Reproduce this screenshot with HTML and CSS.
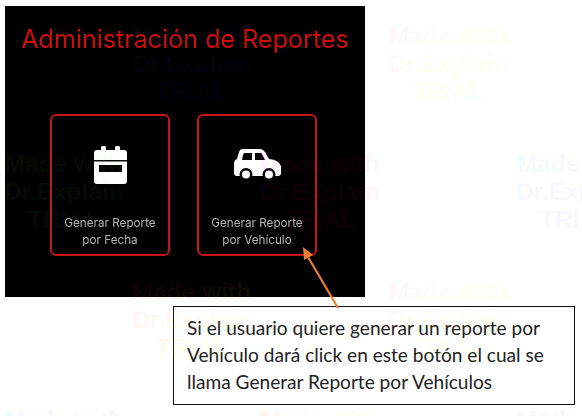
FILE: index.html
```html
<!DOCTYPE html>
<html lang="en">
<head>
  <meta charset="UTF-8" />
  <title>Administración de Reportes</title>
  <link rel="stylesheet" href="styles.css">
</head>
<body>
  <div class="panel">
    <h1 class="panel-title">Administración de Reportes</h1>
    <div class="cards">
      <div class="card">
        <svg class="icon icon-calendar" viewBox="0 0 33 38" width="33" height="38">
          <path fill="#fff" d="M8 0h3q1 0 1 1.500V4h9V1.500Q21 0 22 0h3q1 0 1 1.500V4h4q3 0 3 3v7H0V7q0-3 3-3h4V1.500Q7 0 8 0z"/>
          <path fill="#fff" d="M0 15.500h33V35q0 3-3 3H3q-3 0-3-3z"/>
          <rect x="5" y="19" width="23" height="7" fill="#000"/>
        </svg>
        <span class="card-label">Generar Reporte<br>por Fecha</span>
      </div>
      <div class="card">
        <svg class="icon icon-car" viewBox="0 0 47 33" width="47" height="33">
          <path fill="#fff" d="M8 0H26Q29 0 31 3L35 10Q45 11 47 17V24Q47 27 44 27H3Q0 27 0 24V15Q0 11 3 10L5 3Q6 0 8 0Z"/>
          <path fill="#000" d="M11 4H18V11H8L9 6Q9.500 4 11 4ZM21 4H26Q27.500 4 28 5L31 11H21Z"/>
          <circle cx="12" cy="25.500" r="6.500" fill="#000"/>
          <circle cx="12" cy="25.500" r="4" fill="#fff"/>
          <circle cx="35" cy="25.500" r="6.500" fill="#000"/>
          <circle cx="35" cy="25.500" r="4" fill="#fff"/>
        </svg>
        <span class="card-label">Generar Reporte<br>por Vehículo</span>
      </div>
    </div>
  </div>

  <div class="callout">
    Si el usuario quiere generar un reporte por<br>
    Vehículo dará click en este botón el cual se<br>
    llama Generar Reporte por Vehículos
  </div>

  <svg class="arrow" viewBox="0 0 44 70" width="44" height="70">
    <line x1="37" y1="64" x2="7" y2="13" stroke="#ed7d31" stroke-width="2.200"/>
    <polygon points="2,3 12,11 3,16" fill="#ed7d31"/>
  </svg>

  <div class="watermarks">
    <div></div><div class="tile tile-a">Made with<br>Dr.Explain<br>TRIAL</div><div></div><div class="tile tile-b">Made with<br>Dr.Explain<br>TRIAL</div><div></div>
    <div class="tile tile-c">Made with<br>Dr.Explain<br>TRIAL</div><div></div><div class="tile tile-d">Made with<br>Dr.Explain<br>TRIAL</div><div></div><div class="tile tile-e">Made with<br>Dr.Explain<br>TRIAL</div>
    <div></div><div class="tile tile-f">Made with<br>Dr.Explain<br>TRIAL</div><div></div><div class="tile tile-b">Made with<br>Dr.Explain<br>TRIAL</div><div></div>
    <div class="tile tile-e">Made with<br>Dr.Explain<br>TRIAL</div><div></div><div class="tile tile-g">Made with<br>Dr.Explain<br>TRIAL</div><div></div><div class="tile tile-a">Made with<br>Dr.Explain<br>TRIAL</div>
  </div>
</body>
</html>
```

FILE: styles.css
```css
html, body {
  height: 416px;
  overflow: hidden;
}

body {
  margin: 0;
  background: #fff;
  font-family: "Lato", sans-serif;
}

.panel {
  width: 360px;
  height: 291px;
  margin: 6px 0 0 5px;
  background: #000;
  overflow: hidden;
}

.panel-title {
  margin: 18px 0 0;
  text-align: center;
  font-family: "Inter", sans-serif;
  font-weight: 400;
  font-size: 25.100px;
  line-height: 30px;
  color: #cf0d0d;
  filter: blur(0.4px);
}

.cards {
  display: flex;
  gap: 27px;
  margin: 60px 0 0 45px;
}

.card {
  width: 120px;
  height: 142px;
  box-sizing: border-box;
  border: 2px solid #c5161a;
  border-radius: 6px;
  display: flex;
  flex-direction: column;
  align-items: center;
  padding-top: 30px;
}

.icon {
  display: block;
  filter: blur(0.3px);
}

.icon-car {
  margin-top: 3px;
  height: 33px;
}

.card-label {
  margin-top: 31px;
  text-align: center;
  font-family: "Inter", sans-serif;
  font-weight: 400;
  font-size: 11.700px;
  line-height: 17px;
  color: #b4b4b4;
  filter: blur(0.4px);
}

.icon-car + .card-label {
  margin-top: 33px;
}

.callout {
  box-sizing: border-box;
  width: 402px;
  height: 99px;
  margin: 9px 0 0 173px;
  padding: 7px 13px;
  border: 1px solid #111;
  background: #fff;
  font-size: 19.100px;
  line-height: 27px;
  white-space: nowrap;
  color: #222;
}

.arrow {
  position: absolute;
  left: 301px;
  top: 244px;
}

.watermarks {
  position: absolute;
  left: 0;
  top: 0;
  width: 582px;
  height: 416px;
  overflow: hidden;
  display: grid;
  grid-template-columns: repeat(5, 128px);
  grid-auto-rows: 128px;
  pointer-events: none;
}

.tile {
  display: flex;
  align-items: center;
  justify-content: center;
  text-align: center;
  font-family: "Liberation Sans", sans-serif;
  font-weight: 700;
  font-size: 24.500px;
  line-height: 28px;
  color: transparent;
  -webkit-background-clip: text;
  background-clip: text;
}

.tile-a { background-image: linear-gradient(160deg, rgba(0, 160, 80, 0.05), rgba(60, 0, 255, 0.04) 55%, rgba(180, 0, 200, 0.04)); }
.tile-b { background-image: linear-gradient(125deg, rgba(255, 0, 200, 0.05), rgba(255, 230, 0, 0.05) 50%, rgba(0, 255, 100, 0.05)); }
.tile-c { background-image: linear-gradient(150deg, rgba(220, 200, 0, 0.06), rgba(60, 220, 60, 0.05) 50%, rgba(0, 120, 255, 0.04)); }
.tile-d { background-image: linear-gradient(120deg, rgba(200, 0, 255, 0.05), rgba(255, 0, 60, 0.05) 55%, rgba(255, 160, 0, 0.05)); }
.tile-e { background-image: linear-gradient(120deg, rgba(0, 240, 255, 0.05), rgba(90, 60, 255, 0.05) 50%, rgba(255, 0, 160, 0.05)); }
.tile-f { background-image: linear-gradient(135deg, rgba(255, 0, 60, 0.06), rgba(255, 210, 0, 0.06) 60%, rgba(255, 210, 0, 0.06)); }
.tile-g { background-image: linear-gradient(120deg, rgba(255, 0, 0, 0.06), rgba(255, 200, 0, 0.05) 50%, rgba(0, 255, 80, 0.05)); }
```
